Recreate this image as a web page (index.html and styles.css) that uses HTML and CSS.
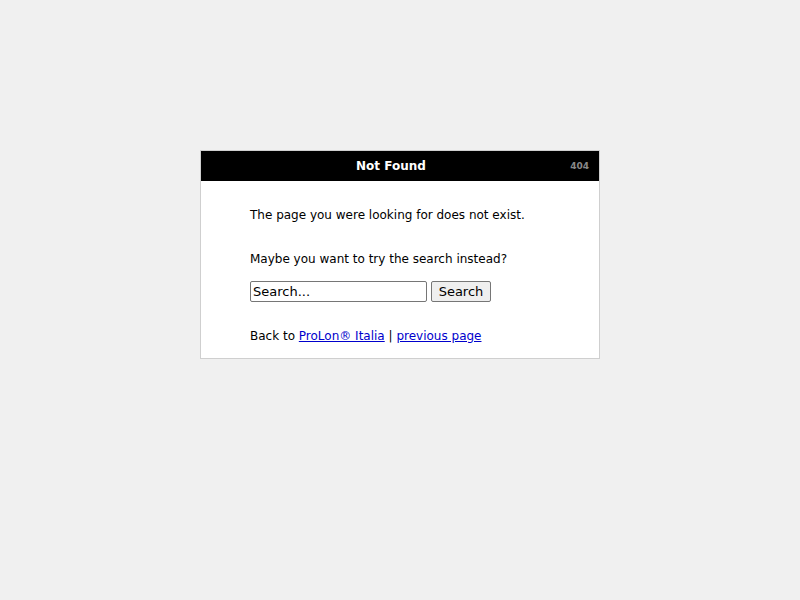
FILE: index.html
```html
<!DOCTYPE html>
<html lang="en">
<head>
  <meta charset="UTF-8" />
  <title>Not Found</title>
  <link rel="stylesheet" href="styles.css">
</head>
<body>
  <div class="error-box">
    <div class="error-header">
      <h1>Not Found</h1>
      <span class="error-code">404</span>
    </div>
    <div class="error-body">
      <p class="msg-missing">The page you were looking for does not exist.</p>
      <p class="msg-search">Maybe you want to try the search instead?</p>
      <form class="search-form" action="#">
        <input type="text" name="s" value="Search..." class="search-input">
        <button type="submit" class="search-btn">Search</button>
      </form>
      <p class="msg-back">Back to <a href="#">ProLon® Italia</a> | <a href="#">previous page</a></p>
    </div>
  </div>
</body>
</html>
```

FILE: styles.css
```css
/* General */
body { margin: 0; background-color: #f0f0f0; font-family: 'DejaVu Sans', sans-serif; font-size: 12px; line-height: 14px; color: #000; }
a { color: #0000cc; }

/* Box */
.error-box {
  width: 398px; margin: 150px auto 0; background-color: #fff; border: 1px solid #cfcfcf;
}
.error-header {
  position: relative; height: 30px; background-color: #000; color: #fff;
  display: flex; align-items: center; justify-content: center;
}
.error-header h1 { margin: 0; padding-right: 18px; font-size: 12px; font-weight: bold; }
.error-code { position: absolute; right: 10px; top: 10px; font-size: 9px; font-weight: bold; color: #888; line-height: 11px; }

/* Body */
.error-body { padding: 27px 49px 15px; }
.error-body p { margin: 0; }
.msg-search { margin-top: 30px !important; }
.search-form { margin-top: 15px; display: flex; gap: 4px; align-items: center; }
.search-input {
  width: 177px; height: 21px; box-sizing: border-box; margin: 0; padding: 1px 2px;
  font-family: 'DejaVu Sans', sans-serif; font-size: 13px; border: 1px solid #767676; border-radius: 2px;
}
.search-btn {
  width: 60px; height: 21px; box-sizing: border-box; margin: 0; padding: 0 6px;
  font-family: 'DejaVu Sans', sans-serif; font-size: 13px; background-color: #efefef;
  border: 1px solid #767676; border-radius: 2px;
}
.msg-back { margin-top: 27px !important; }
```
